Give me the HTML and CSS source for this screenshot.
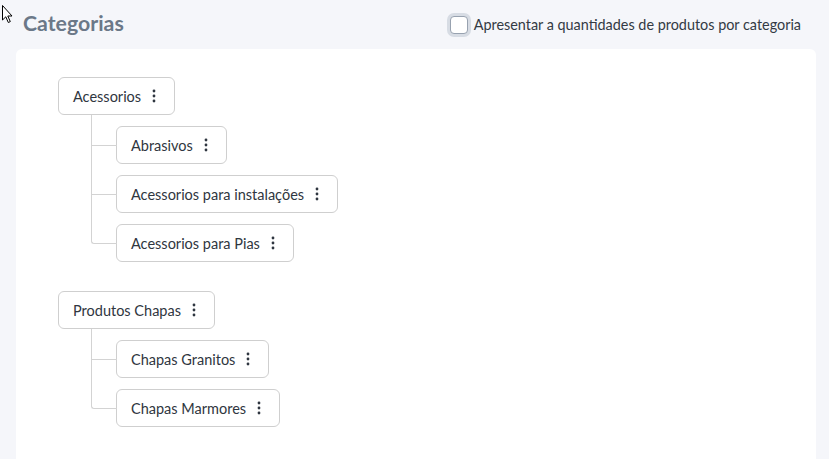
FILE: index.html
```html
<!DOCTYPE html>
<html lang="pt">
<head>
<meta charset="utf-8">
<link rel="stylesheet" href="styles.css">
</head>
<body>
<div class="page">
  <header class="head">
    <h1 class="title">Categorias</h1>
    <label class="chk"><span class="chk-box"></span><span class="chk-text">Apresentar a quantidades de produtos por categoria</span></label>
  </header>
  <main class="card">
    <ul class="tree">
      <li class="group">
        <div class="node"><span class="node-text">Acessorios</span><svg class="kebab" width="4" height="14" viewBox="0 0 4 14"><circle cx="2" cy="2" r="1.4"/><circle cx="2" cy="7" r="1.4"/><circle cx="2" cy="12" r="1.4"/></svg></div>
        <ul class="children">
          <li class="child"><div class="node"><span class="node-text">Abrasivos</span><svg class="kebab" width="4" height="14" viewBox="0 0 4 14"><circle cx="2" cy="2" r="1.4"/><circle cx="2" cy="7" r="1.4"/><circle cx="2" cy="12" r="1.4"/></svg></div></li>
          <li class="child"><div class="node"><span class="node-text">Acessorios para instalações</span><svg class="kebab" width="4" height="14" viewBox="0 0 4 14"><circle cx="2" cy="2" r="1.4"/><circle cx="2" cy="7" r="1.4"/><circle cx="2" cy="12" r="1.4"/></svg></div></li>
          <li class="child"><div class="node"><span class="node-text">Acessorios para Pias</span><svg class="kebab" width="4" height="14" viewBox="0 0 4 14"><circle cx="2" cy="2" r="1.4"/><circle cx="2" cy="7" r="1.4"/><circle cx="2" cy="12" r="1.4"/></svg></div></li>
        </ul>
      </li>
      <li class="group">
        <div class="node"><span class="node-text">Produtos Chapas</span><svg class="kebab" width="4" height="14" viewBox="0 0 4 14"><circle cx="2" cy="2" r="1.4"/><circle cx="2" cy="7" r="1.4"/><circle cx="2" cy="12" r="1.4"/></svg></div>
        <ul class="children">
          <li class="child"><div class="node"><span class="node-text">Chapas Granitos</span><svg class="kebab" width="4" height="14" viewBox="0 0 4 14"><circle cx="2" cy="2" r="1.4"/><circle cx="2" cy="7" r="1.4"/><circle cx="2" cy="12" r="1.4"/></svg></div></li>
          <li class="child"><div class="node"><span class="node-text">Chapas Marmores</span><svg class="kebab" width="4" height="14" viewBox="0 0 4 14"><circle cx="2" cy="2" r="1.4"/><circle cx="2" cy="7" r="1.4"/><circle cx="2" cy="12" r="1.4"/></svg></div></li>
        </ul>
      </li>
    </ul>
  </main>
</div>
<svg class="cursor" width="12" height="20" viewBox="0 0 12 20"><path d="M1.5 1.5 L1.5 16 L4.8 12.8 L7.3 18.5 L9.3 17.6 L6.8 12 L11 12 Z" fill="#fff" stroke="#000" stroke-width="1" stroke-linejoin="round"/></svg>
</body>
</html>
```
FILE: styles.css
```css
* { box-sizing: border-box; }
html, body { margin: 0; padding: 0; }
body {
  background: #f5f6fa;
  font-family: Lato, "Noto Sans", sans-serif;
  color: #2f3640;
  width: 829px;
  height: 459px;
  overflow: hidden;
}
.page {
  padding: 0 13px 0 16px;
}
.head {
  display: flex;
  align-items: center;
  justify-content: space-between;
  height: 49px;
}
.title {
  margin: 0 0 0 7px;
  font-size: 21.3px;
  font-weight: 700;
  color: #6b7888;
  padding-bottom: 4px;
}
.chk {
  display: flex;
  align-items: center;
  gap: 6px;
  margin-right: 15px;
  font-size: 14.4px;
  color: #333a44;
}
.chk-box {
  width: 18px;
  height: 18px;
  margin-left: 3px;
  border: 1.5px solid #98a2b0;
  border-radius: 4px;
  background: #fff;
  box-shadow: 0 0 0 3px #d7dce4;
}
.card {
  background: #fff;
  border-radius: 6px;
  padding: 28px 42px 40px;
  min-height: 420px;
}
.tree, .children {
  list-style: none;
  margin: 0;
  padding: 0;
}
.group + .group { margin-top: 29px; }
.node {
  display: inline-flex;
  align-items: center;
  height: 38px;
  padding: 0 18px 0 14px;
  border: 1px solid #cfcfcf;
  border-radius: 6px;
  font-size: 14.5px;
  background: #fff;
}
.kebab {
  margin-left: 11px;
  fill: #2f3640;
}
.children {
  margin-left: 33px;
  padding-left: 25px;
}
.child {
  position: relative;
  padding-top: 11px;
}
.child::before {
  content: "";
  position: absolute;
  left: -25px;
  top: 0;
  width: 25px;
  height: 30px;
  border-left: 1px solid #d3d3d3;
  border-bottom: 1px solid #d3d3d3;
}
.child:not(:last-child)::after {
  content: "";
  position: absolute;
  left: -25px;
  top: 30px;
  bottom: 0;
  border-left: 1px solid #d3d3d3;
}
.child:last-child::before { border-bottom-left-radius: 3px; }
.cursor {
  position: absolute;
  left: 1px;
  top: 4px;
}
```
